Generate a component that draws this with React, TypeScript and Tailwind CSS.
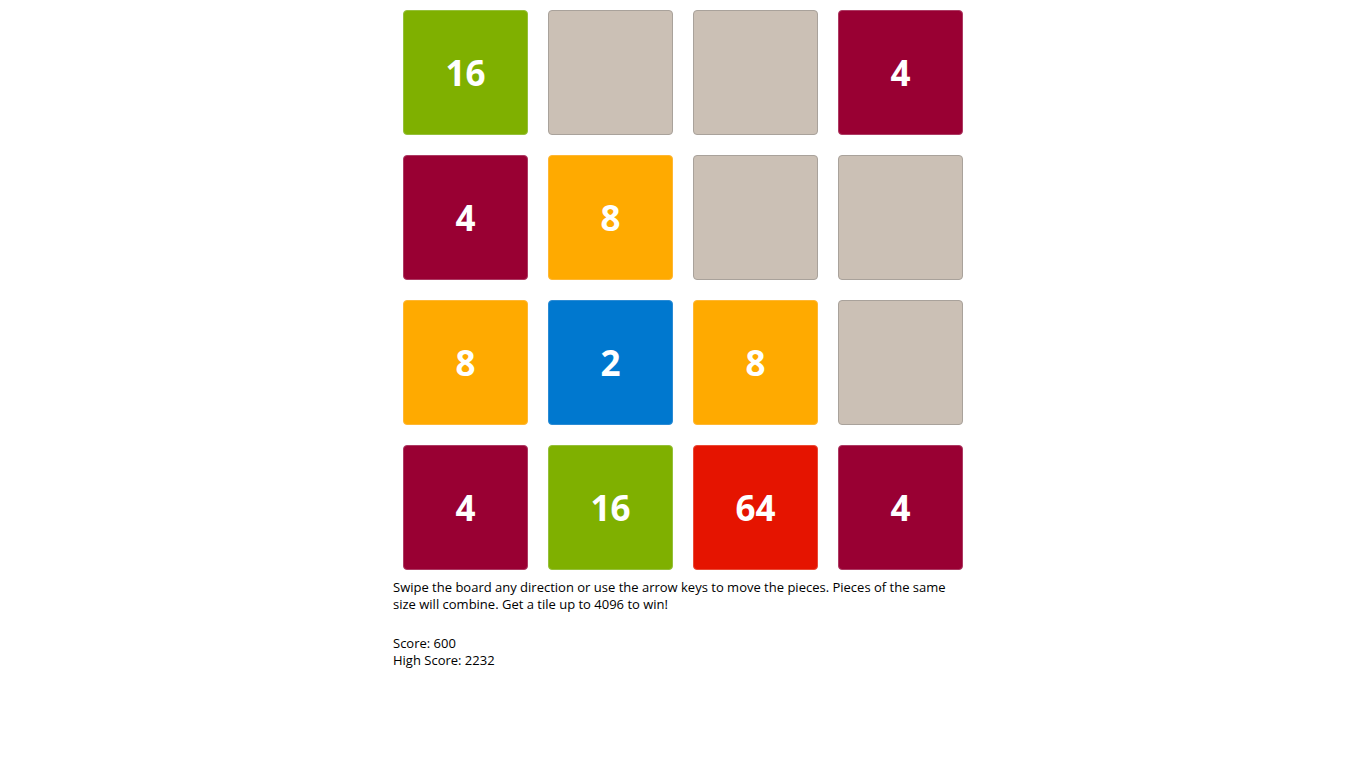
const tiles: (number | null)[] = [16, null, null, 4, 4, 8, null, null, 8, 2, 8, null, 4, 16, 64, 4]

const styles: Record<string, string> = {
  empty: 'bg-[#cbc0b5] border-[#a9a29b]',
  '2': 'bg-[#0078cf] border-[#2b8bd4]',
  '4': 'bg-[#990033] border-[#ad3a63]',
  '8': 'bg-[#ffaa00] border-[#ffb733]',
  '16': 'bg-[#7fb000] border-[#95c03a]',
  '64': 'bg-[#e51400] border-[#ea4a36]',
}

function Tile({ value }: { value: number | null }) {
  const cls = value === null ? styles.empty : styles[String(value)]
  return (
    <div className="p-[10px]">
      <div
        className={`h-[125px] w-[125px] rounded-[4px] border pt-[2px] flex items-center justify-center text-white font-bold text-[35px] ${cls}`}
      >
        {value}
      </div>
    </div>
  )
}

export default function App() {
  return (
    <div className="min-h-screen bg-white">
      <div className="mx-auto w-[580px] font-['Open_Sans',sans-serif]">
        <div className="grid grid-cols-4">
          {tiles.map((v, i) => (
            <Tile key={i} value={v} />
          ))}
        </div>
        <p className="-mt-px w-[565px] text-[13px] leading-[17px] text-black">
          Swipe the board any direction or use the arrow keys to move the pieces. Pieces of the same size
          will combine. Get a tile up to 4096 to win!
        </p>
        <div className="mt-[22px] text-[13px] leading-[17px] text-black">
          <div>Score: 600</div>
          <div>High Score: 2232</div>
        </div>
      </div>
    </div>
  )
}
